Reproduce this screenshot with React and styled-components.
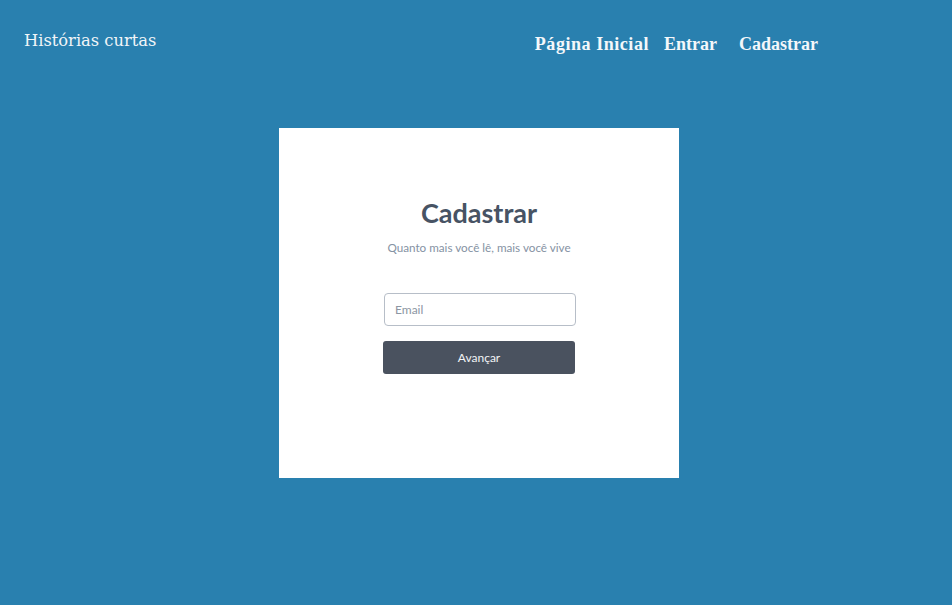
import React from "react";
import styled, { createGlobalStyle } from "styled-components";

const Global = createGlobalStyle`
  html, body { margin: 0; padding: 0; }
  body { background: #2980af; min-height: 605px; font-family: Lato, "Noto Sans", sans-serif; }
`;

const Page = styled.div`
  min-height: 605px;
  background: #2980af;
`;

const Header = styled.header`
  display: flex;
  align-items: flex-start;
  justify-content: space-between;
  padding: 28px 134px 0 24px;
  height: 100px;
  box-sizing: border-box;
`;

const Logo = styled.div`
  font-family: "DejaVu Serif", serif;
  font-size: 16.3px;
  color: #f1f5f8;
  line-height: 25px;
`;

const Nav = styled.nav`
  display: flex;
  align-items: center;
  padding-top: 4px;
`;

const NavLink = styled.a`
  font-family: "Liberation Serif", serif;
  font-weight: bold;
  font-size: 18px;
  color: #f4f7fa;
  line-height: 24px;
  margin-left: ${(p) => p.$gap || 0}px;
  letter-spacing: ${(p) => p.$spacing || 0}px;
  text-decoration: none;
`;

const Main = styled.main`
  display: flex;
  justify-content: center;
  padding-left: 6px;
  padding-top: 28px;
`;

const Card = styled.section`
  width: 400px;
  height: 350px;
  background: #fff;
  display: flex;
  flex-direction: column;
  align-items: center;
  padding-top: 68px;
  box-sizing: border-box;
`;

const Title = styled.h1`
  margin: 0;
  font-family: Lato, sans-serif;
  font-weight: 700;
  font-size: 27px;
  line-height: 34px;
  color: #475364;
`;

const Subtitle = styled.p`
  margin: 9px 0 0;
  font-family: Lato, sans-serif;
  font-size: 11.7px;
  line-height: 16px;
  color: #8592a3;
`;

const Form = styled.form`
  display: flex;
  flex-direction: column;
  align-items: center;
  margin-top: 38px;
  gap: 15px;
`;

const Input = styled.input`
  width: 192px;
  height: 33px;
  box-sizing: border-box;
  border: 1px solid #b7bec8;
  border-radius: 4px;
  padding: 0 10px;
  font-family: Lato, sans-serif;
  font-size: 12px;
  color: #444;
  margin-left: 2px;
  outline: none;
  &::placeholder { color: #8c96a3; }
`;

const Button = styled.button`
  width: 192px;
  height: 33px;
  border: none;
  border-radius: 3px;
  background: #4a525f;
  color: #f2f4f6;
  font-family: Lato, sans-serif;
  font-size: 12px;
  cursor: pointer;
`;

export default function App() {
  return (
    <>
      <Global />
      <Page>
        <Header>
          <Logo>Histórias curtas</Logo>
          <Nav>
            <NavLink href="#" $spacing={0.55}>Página Inicial</NavLink>
            <NavLink href="#" $gap={15}>Entrar</NavLink>
            <NavLink href="#" $gap={22}>Cadastrar</NavLink>
          </Nav>
        </Header>
        <Main>
          <Card>
            <Title>Cadastrar</Title>
            <Subtitle>Quanto mais você lê, mais você vive</Subtitle>
            <Form onSubmit={(e) => e.preventDefault()}>
              <Input type="email" placeholder="Email" />
              <Button type="submit">Avançar</Button>
            </Form>
          </Card>
        </Main>
      </Page>
    </>
  );
}
